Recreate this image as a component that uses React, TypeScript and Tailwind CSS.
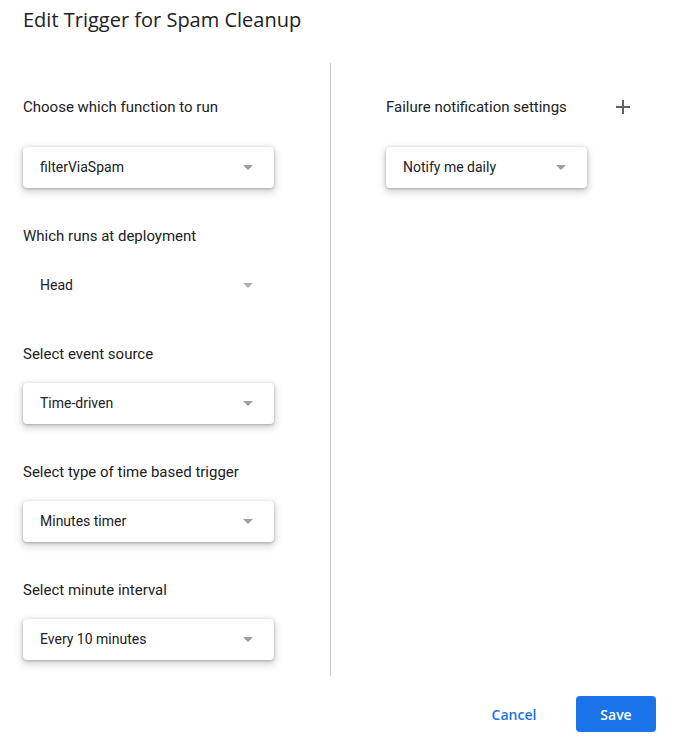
import React from "react";

function Arrow({ light }: { light?: boolean }) {
  return (
    <svg width="10" height="5" viewBox="0 0 10 5" className="shrink-0">
      <path d="M0 0 L10 0 L5 5 Z" fill={light ? "#b0b0b0" : "#9e9e9e"} />
    </svg>
  );
}

function Select({ value, width, flat }: { value: string; width: string; flat?: boolean }) {
  return (
    <div
      className={`${width} h-[41px] flex items-center justify-between pl-[17px] pr-[21px] rounded-[4px] bg-white ${
        flat ? "" : "shadow-[0_1px_3px_0_rgba(60,64,67,0.35),0_3px_7px_2px_rgba(60,64,67,0.18)]"
      }`}
    >
      <span className="text-[14px] text-[#202124] font-['Roboto',sans-serif]">{value}</span>
      <Arrow light={flat} />
    </div>
  );
}

function Section({ label, value, flat, first }: { label: string; value: string; flat?: boolean; first?: boolean }) {
  return (
    <div className={`flex flex-col ${first ? "" : "mt-[38px]"}`}>
      <div className="h-[20px] leading-[20px] text-[15px] text-[#202124] font-['Roboto',sans-serif]">{label}</div>
      <div className={first ? "mt-[30px]" : "mt-[19px]"}>
        <Select value={value} width="w-[251px]" flat={flat} />
      </div>
    </div>
  );
}

export default function App() {
  return (
    <div className="w-[678px] h-[750px] bg-white relative font-['Roboto',sans-serif]">
      <div className="pl-[23px] pt-[7px] h-[63px]">
        <h1 className="text-[20px] leading-[26px] text-[#202124] font-['Open_Sans',sans-serif]">
          Edit Trigger for Spam Cleanup
        </h1>
      </div>
      <div className="flex">
        <div className="w-[331px] pl-[23px] pt-[34px] border-r border-[#c8c8c8] h-[613px]">
          <Section first label="Choose which function to run" value="filterViaSpam" />
          <Section label="Which runs at deployment" value="Head" flat />
          <Section label="Select event source" value="Time-driven" />
          <Section label="Select type of time based trigger" value="Minutes timer" />
          <Section label="Select minute interval" value="Every 10 minutes" />
        </div>
        <div className="pl-[55px] pt-[34px] flex-1">
          <div className="flex items-center h-[20px]">
            <div className="text-[15px] leading-[20px] text-[#202124] w-[230px]">Failure notification settings</div>
            <svg width="14" height="14" viewBox="0 0 14 14">
              <path d="M7 0 V14 M0 7 H14" stroke="#5f6368" strokeWidth="2" />
            </svg>
          </div>
          <div className="mt-[30px]">
            <Select value="Notify me daily" width="w-[201px]" />
          </div>
        </div>
      </div>
      <div className="flex justify-end items-center pr-[22px] pt-[20px] gap-[22px]">
        <button className="h-[36px] w-[80px] text-[14px] font-semibold text-[#1a73e8] font-['Open_Sans',sans-serif]">
          Cancel
        </button>
        <button className="h-[36px] w-[80px] rounded-[4px] bg-[#1a73e8] text-white text-[14px] font-semibold font-['Open_Sans',sans-serif]">
          Save
        </button>
      </div>
    </div>
  );
}
